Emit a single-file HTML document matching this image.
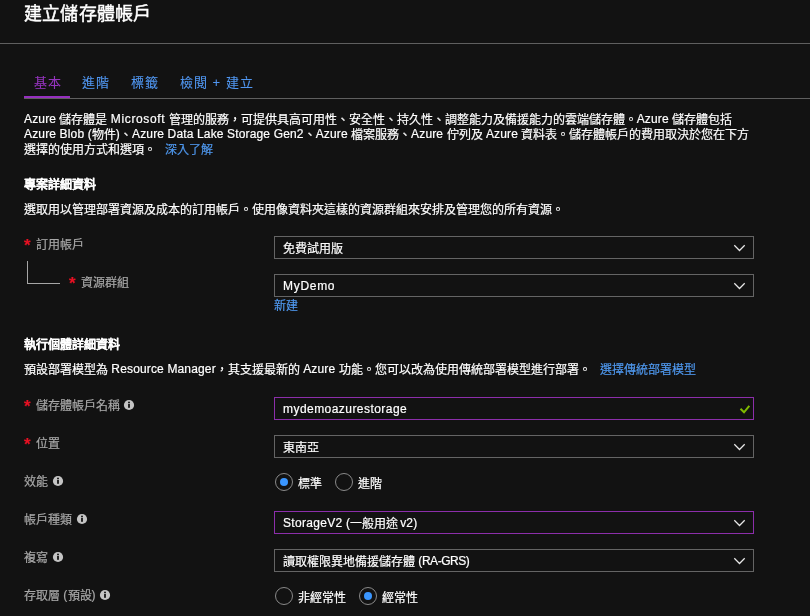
<!DOCTYPE html>
<html lang="zh-TW">
<head>
<meta charset="utf-8">
<style>
html,body{margin:0;padding:0;}
body{will-change:transform;width:810px;height:616px;overflow:hidden;background:#121212;color:#fff;font-family:"Liberation Sans",sans-serif;position:relative;}
.a{position:absolute;white-space:nowrap;line-height:16px;font-size:12px;-webkit-text-stroke:0.2px currentColor;}
.title{left:24px;top:1px;font-size:18px;line-height:26px;color:#fff;letter-spacing:0.2px;-webkit-text-stroke:0.45px currentColor;}
.hline{position:absolute;left:0;top:43px;width:810px;height:1px;background:#5f5f5f;}
.tab{font-size:13px;line-height:18px;color:#5096f0;-webkit-text-stroke:0.1px currentColor;letter-spacing:1px;}
.tab.on{color:#9434bd;}
.tabline{position:absolute;left:24px;top:98px;width:786px;height:1px;background:#5f5f5f;}
.tabsel{position:absolute;left:24px;top:96px;width:46px;height:2px;background:#962fbf;}
.p{color:#fff;}
.h{font-weight:bold;color:#fff;-webkit-text-stroke:0.1px currentColor;}
.lbl{color:#a8a8a8;}
.req{color:#e81123;font-size:17px;font-weight:bold;}
.link{color:#4f98ee;}
.l{letter-spacing:0.15px;position:relative;top:-1px;}
.box{position:absolute;left:274px;width:478px;height:21px;border:1px solid #646464;}
.box.pu{border-color:#8c2eab;}
.bt{left:283px;}
.radio{position:absolute;width:16px;height:16px;border:1px solid #8a8a8a;border-radius:50%;}
.radio.on::after{content:"";position:absolute;left:4px;top:4px;width:8px;height:8px;border-radius:50%;background:#3a96ff;}
.tl{position:absolute;background:#a6a6a6;}
</style>
</head>
<body>
<div class="a title">建立儲存體帳戶</div>
<div class="hline"></div>

<div class="a tab on" style="left:34px;top:74px;">基本</div>
<div class="a tab" style="left:82px;top:74px;">進階</div>
<div class="a tab" style="left:131px;top:74px;">標籤</div>
<div class="a tab" style="left:180px;top:74px;">檢閱 + 建立</div>
<div class="tabline"></div>
<div class="tabsel"></div>

<div class="a p" style="left:24px;top:112px;"><span class="l">Azure</span> 儲存體是 <span class="l" style="letter-spacing:0.65px">Microsoft</span> 管理的服務，可提供具高可用性、安全性、持久性、調整能力及備援能力的雲端儲存體。<span class="l">Azure</span> 儲存體包括</div>
<div class="a p" style="left:24px;top:127px;"><span class="l">Azure Blob (</span>物件<span class="l">)</span>、<span class="l">Azure Data Lake Storage Gen2</span>、<span class="l">Azure</span> 檔案服務、<span class="l">Azure</span> 佇列及 <span class="l">Azure</span> 資料表。儲存體帳戶的費用取決於您在下方</div>
<div class="a p" style="left:24px;top:142px;">選擇的使用方式和選項。 <span class="link" style="margin-left:6px">深入了解</span></div>

<div class="a h" style="left:24px;top:177px;">專案詳細資料</div>
<div class="a p" style="left:24px;top:202px;">選取用以管理部署資源及成本的訂用帳戶。使用像資料夾這樣的資源群組來安排及管理您的所有資源。</div>

<div class="a req" style="left:24px;top:238px;">*</div>
<div class="a lbl" style="left:35.5px;top:237px;">訂用帳戶</div>
<div class="box" style="top:236px;"></div>
<div class="a bt p" style="top:241px;">免費試用版</div>

<div class="tl" style="left:27px;top:261px;width:1px;height:23px;"></div>
<div class="tl" style="left:27px;top:283px;width:33px;height:1px;"></div>
<div class="a req" style="left:69px;top:276px;">*</div>
<div class="a lbl" style="left:80.5px;top:275px;">資源群組</div>
<div class="box" style="top:274px;"></div>
<div class="a bt p" style="top:278px;"><span class="l" style="letter-spacing:0.7px;top:0">MyDemo</span></div>
<div class="a link" style="left:274px;top:298px;">新建</div>

<div class="a h" style="left:24px;top:337px;">執行個體詳細資料</div>
<div class="a p" style="left:24px;top:362px;">預設部署模型為 <span class="l">Resource Manager</span>，其支援最新的 <span class="l">Azure</span> 功能。您可以改為使用傳統部署模型進行部署。 <span class="link" style="margin-left:6px">選擇傳統部署模型</span></div>

<div class="a req" style="left:24px;top:399px;">*</div>
<div class="a lbl" style="left:35.5px;top:398px;">儲存體帳戶名稱</div>
<div class="box pu" style="top:397px;"></div>
<div class="a bt p" style="top:401px;"><span class="l" style="letter-spacing:0.45px;top:0">mydemoazurestorage</span></div>

<div class="a req" style="left:24px;top:437px;">*</div>
<div class="a lbl" style="left:35.5px;top:436px;">位置</div>
<div class="box" style="top:435px;"></div>
<div class="a bt p" style="top:440px;">東南亞</div>

<div class="a lbl" style="left:24px;top:474px;">效能</div>
<div class="radio on" style="left:275px;top:473px;"></div>
<div class="a p" style="left:298px;top:476px;">標準</div>
<div class="radio" style="left:335px;top:473px;"></div>
<div class="a p" style="left:358px;top:476px;">進階</div>

<div class="a lbl" style="left:24px;top:512px;">帳戶種類</div>
<div class="box pu" style="top:511px;"></div>
<div class="a bt p" style="top:516px;"><span class="l" style="letter-spacing:0.3px">StorageV2 (</span>一般用途 <span class="l" style="margin-left:-1.5px">v2)</span></div>

<div class="a lbl" style="left:24px;top:550px;">複寫</div>
<div class="box" style="top:549px;"></div>
<div class="a bt p" style="top:554px;">讀取權限異地備援儲存體 <span class="l" style="letter-spacing:-0.45px">(RA-GRS)</span></div>

<div class="a lbl" style="left:24px;top:588px;">存取層 <span class="l">(</span>預設<span class="l">)</span></div>
<div class="radio" style="left:275px;top:587px;"></div>
<div class="a p" style="left:298px;top:590px;">非經常性</div>
<div class="radio on" style="left:359px;top:587px;"></div>
<div class="a p" style="left:382px;top:590px;">經常性</div>

<svg width="810" height="616" style="position:absolute;left:0;top:0">
<polyline points="734.3,245.3 739.5,250.5 744.7,245.3" fill="none" stroke="#e8e8e8" stroke-width="1.25"/>
<polyline points="734.3,283.3 739.5,288.5 744.7,283.3" fill="none" stroke="#e8e8e8" stroke-width="1.25"/>
<polyline points="734.3,444.3 739.5,449.5 744.7,444.3" fill="none" stroke="#e8e8e8" stroke-width="1.25"/>
<polyline points="734.3,520.3 739.5,525.5 744.7,520.3" fill="none" stroke="#e8e8e8" stroke-width="1.25"/>
<polyline points="734.3,558.3 739.5,563.5 744.7,558.3" fill="none" stroke="#e8e8e8" stroke-width="1.25"/>
<polyline points="740.5,408.8 744,412.3 749.3,405.8" fill="none" stroke="#7fba00" stroke-width="2"/>
<g fill="#c4c4c4"><circle cx="129" cy="405" r="5.1"/><circle cx="58" cy="481" r="5.1"/><circle cx="82" cy="519" r="5.1"/><circle cx="58" cy="557" r="5.1"/><circle cx="105" cy="595" r="5.1"/></g>
<g fill="#121212">
<rect x="128.1" y="401.7" width="1.8" height="1.4"/><rect x="128.1" y="403.8" width="1.8" height="4"/>
<rect x="57.1" y="477.7" width="1.8" height="1.4"/><rect x="57.1" y="479.8" width="1.8" height="4"/>
<rect x="81.1" y="515.7" width="1.8" height="1.4"/><rect x="81.1" y="517.8" width="1.8" height="4"/>
<rect x="57.1" y="553.7" width="1.8" height="1.4"/><rect x="57.1" y="555.8" width="1.8" height="4"/>
<rect x="104.1" y="591.7" width="1.8" height="1.4"/><rect x="104.1" y="593.8" width="1.8" height="4"/>
</g>
</svg>
</body>
</html>
